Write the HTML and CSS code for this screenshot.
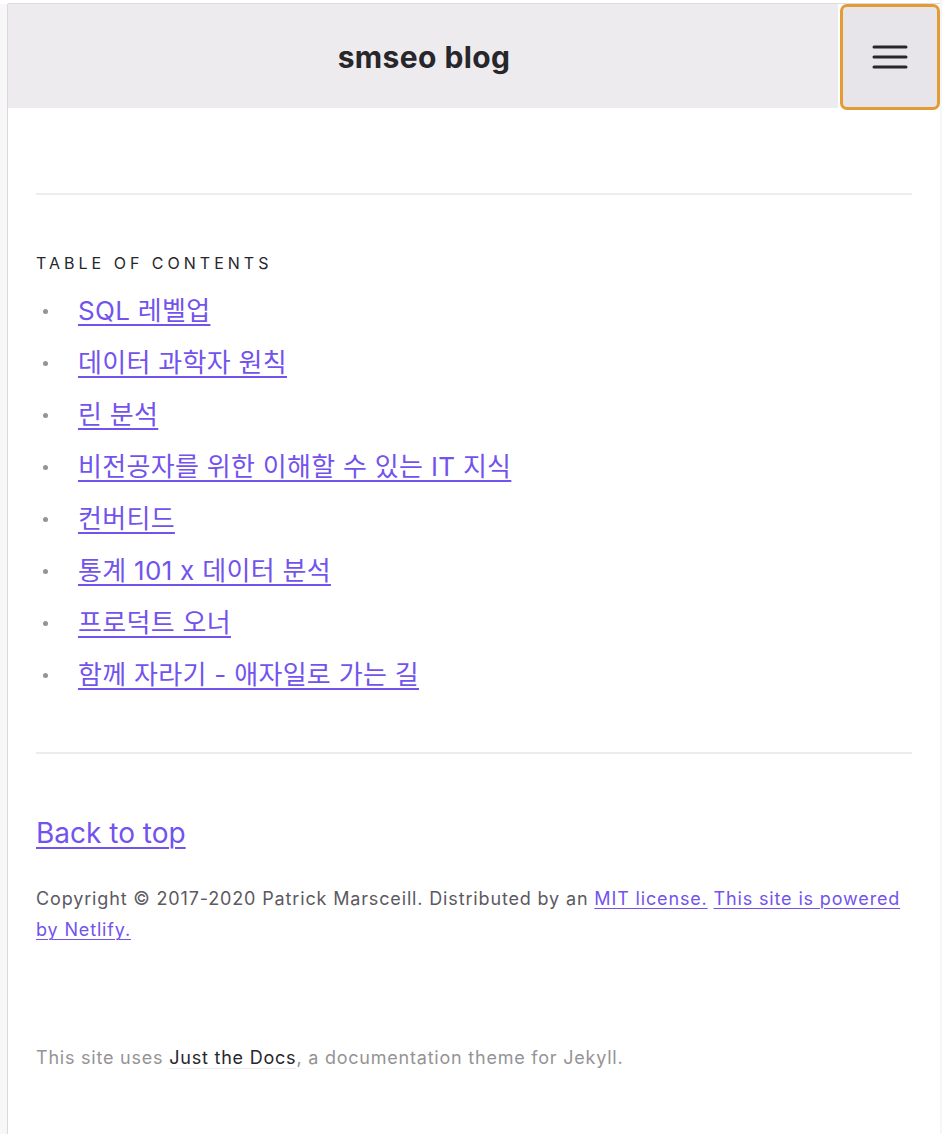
FILE: index.html
```html
<!DOCTYPE html>
<html lang="ko">
<head>
<meta charset="utf-8">
<title>smseo blog</title>
<link rel="stylesheet" href="styles.css">
</head>
<body>
<div class="shell">
  <div class="strip"></div>
  <div class="main">
    <header class="site-header">
      <div class="title-bar"><span class="site-title">smseo blog</span></div>
      <button class="menu-btn" aria-label="Menu">
        <svg width="36" height="26" viewBox="0 0 36 26" aria-hidden="true">
          <path d="M2 3h32M2 13h32M2 23h32" stroke="#27262b" stroke-width="3" stroke-linecap="round" fill="none"/>
        </svg>
      </button>
    </header>
    <div class="content">
      <hr class="rule rule-top">
      <div class="toc-label">Table of contents</div>
      <ul class="toc">
        <li><a href="#">SQL 레벨업</a></li>
        <li><a href="#">데이터 과학자 원칙</a></li>
        <li><a href="#">린 분석</a></li>
        <li><a href="#">비전공자를 위한 이해할 수 있는 IT 지식</a></li>
        <li><a href="#">컨버티드</a></li>
        <li><a href="#">통계 101 x 데이터 분석</a></li>
        <li><a href="#">프로덕트 오너</a></li>
        <li><a href="#">함께 자라기 - 애자일로 가는 길</a></li>
      </ul>
      <hr class="rule rule-bottom">
      <p class="back-top"><a href="#">Back to top</a></p>
      <p class="copyright">Copyright © 2017-2020 Patrick Marsceill. Distributed by an <a href="#">MIT license.</a> <a href="#">This site is powered by Netlify.</a></p>
      <p class="credit">This site uses <a href="#">Just the Docs</a>, a documentation theme for Jekyll.</p>
    </div>
  </div>
  <div class="edge"></div>
</div>
</body>
</html>
```
FILE: styles.css
```css
html, body {
  margin: 0;
  padding: 0;
  background: #ffffff;
}
body {
  font-family: Inter, "Noto Sans CJK KR", "Liberation Sans", sans-serif;
  color: #27262b;
}
.shell {
  display: flex;
  min-height: 1134px;
}
.strip {
  width: 7px;
  flex: none;
  background: #f7f7f7;
  border-right: 1px solid #dadada;
  margin-top: 4px;
}
.edge {
  width: 2px;
  flex: none;
  background: #f6f5fa;
}
.main {
  flex: 1;
  min-width: 0;
  margin-top: 3px;
  border-top: 1px solid #dcdcdc;
}
.site-header {
  display: flex;
  align-items: flex-start;
  gap: 2px;
}
.title-bar {
  flex: 1;
  height: 104px;
  background: #eeebee;
  display: flex;
  align-items: center;
  justify-content: center;
}
.site-title {
  font-size: 30px;
  font-weight: 700;
  color: #27262b;
  letter-spacing: 0.4px;
  margin-top: 2px;
  margin-left: 2px;
}
.menu-btn {
  width: 100px;
  height: 106px;
  flex: none;
  box-sizing: border-box;
  border: 3px solid #e39c34;
  border-radius: 7px;
  background: #e7e5e9;
  display: flex;
  align-items: center;
  justify-content: center;
  padding: 0;
  margin: 0;
}
.content {
  padding: 0 28px 0 28px;
}
.rule {
  border: 0;
  height: 2px;
  background: #eeebee;
  margin: 0;
}
.rule-top {
  margin-top: 83px;
}
.toc-label {
  margin-top: 56px;
  font-size: 16px;
  line-height: 24px;
  text-transform: uppercase;
  letter-spacing: 4px;
  color: #27262b;
}
.toc {
  list-style: none;
  margin: 10px 0 0 0;
  padding: 0;
}
.toc li {
  position: relative;
  font-size: 26px;
  line-height: 52px;
  padding-left: 42px;
  letter-spacing: 0.3px;
}
.toc li::before {
  content: "";
  position: absolute;
  left: 7px;
  top: 24px;
  width: 5px;
  height: 5px;
  border-radius: 50%;
  background: #959396;
}
a {
  color: #7253ed;
  text-decoration: underline;
  text-decoration-thickness: 2px;
  text-underline-offset: 4px;
}
.rule-bottom {
  margin-top: 51px;
}
.back-top {
  margin: 59px 0 0 0;
  font-size: 28px;
  line-height: 40px;
}
.copyright {
  margin: 30px 0 0 0;
  font-size: 18px;
  line-height: 31px;
  color: #5c5962;
  letter-spacing: 0.85px;
}
.copyright a {
  text-decoration-thickness: 1px;
  text-underline-offset: 3px;
}
.credit {
  margin: 97px 0 0 0;
  font-size: 18px;
  line-height: 31px;
  color: #959396;
  letter-spacing: 0.78px;
}
.credit a {
  color: #27262b;
  text-decoration: none;
  border-bottom: 1px solid #eeebee;
}
```
